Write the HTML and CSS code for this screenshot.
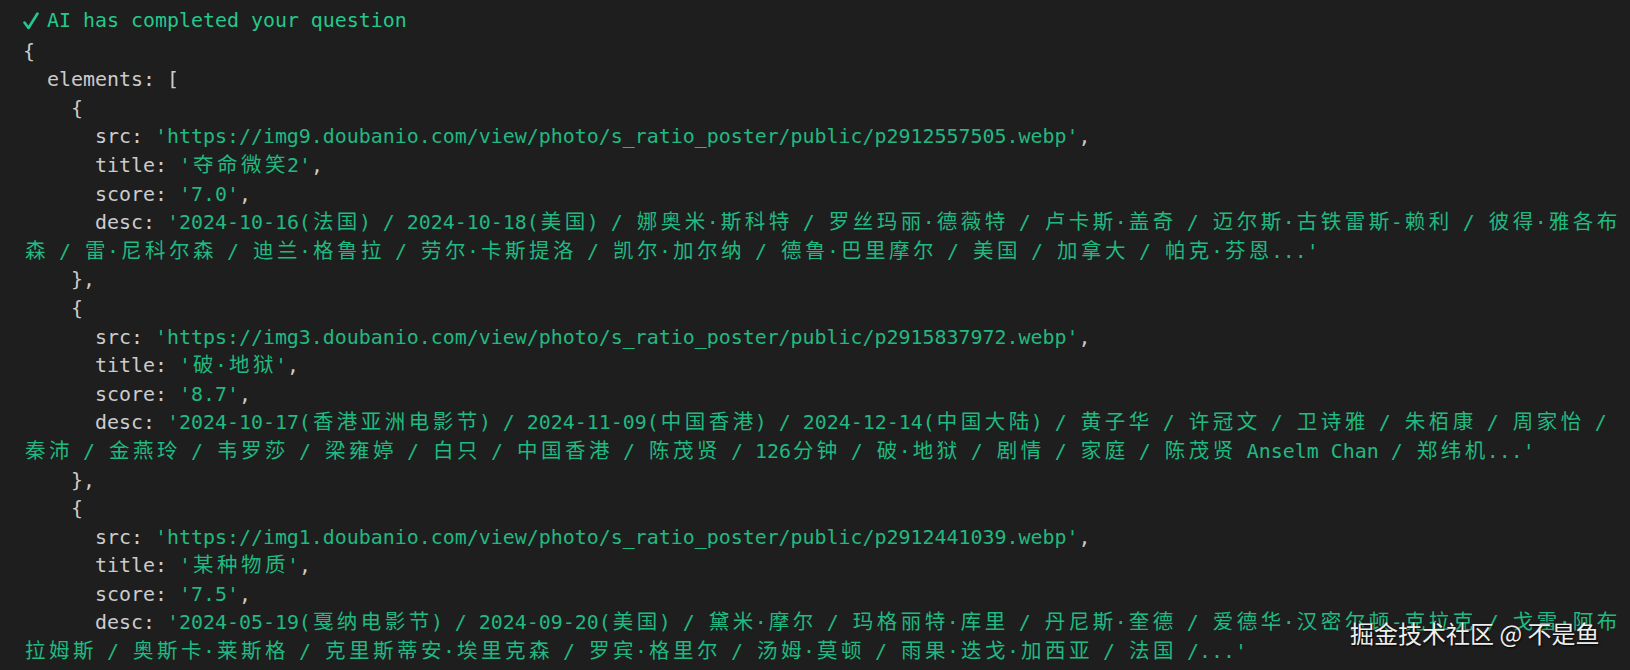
FILE: index.html
```html
<!DOCTYPE html>
<html lang="en">
<head>
<meta charset="utf-8">
<title>Terminal output</title>
<link rel="stylesheet" href="styles.css">
</head>
<body>
<main class="term">
<div class="line title"><span class="check"><svg width="16" height="18" viewBox="0 0 16 18"><path d="M1.5 10.5 L5.5 16 L14.5 1.5" fill="none" stroke="#23c98a" stroke-width="2.6" stroke-linecap="round" stroke-linejoin="round"/></svg></span>AI has completed your question</div>
<div class="line">{</div>
<div class="line">  elements: [</div>
<div class="line">    {</div>
<div class="line">      src: <span class="s">'https://img9.doubanio.com/view/photo/s_ratio_poster/public/p2912557505.webp'</span>,</div>
<div class="line">      title: <span class="s">'<span class="c">夺命微笑</span>2'</span>,</div>
<div class="line">      score: <span class="s">'7.0'</span>,</div>
<div class="line">      desc: <span class="s">'2024-10-16(<span class="c">法国</span>) / 2024-10-18(<span class="c">美国</span>) / <span class="c">娜奥米</span>·<span class="c">斯科特</span> / <span class="c">罗丝玛丽</span>·<span class="c">德薇特</span> / <span class="c">卢卡斯</span>·<span class="c">盖奇</span> / <span class="c">迈尔斯</span>·<span class="c">古铁雷斯</span>-<span class="c">赖利</span> / <span class="c">彼得</span>·<span class="c">雅各布</span></span></div>
<div class="line"><span class="s"><span class="c">森</span> / <span class="c">雷</span>·<span class="c">尼科尔森</span> / <span class="c">迪兰</span>·<span class="c">格鲁拉</span> / <span class="c">劳尔</span>·<span class="c">卡斯提洛</span> / <span class="c">凯尔</span>·<span class="c">加尔纳</span> / <span class="c">德鲁</span>·<span class="c">巴里摩尔</span> / <span class="c">美国</span> / <span class="c">加拿大</span> / <span class="c">帕克</span>·<span class="c">芬恩</span>...'</span></div>
<div class="line">    },</div>
<div class="line">    {</div>
<div class="line">      src: <span class="s">'https://img3.doubanio.com/view/photo/s_ratio_poster/public/p2915837972.webp'</span>,</div>
<div class="line">      title: <span class="s">'<span class="c">破</span>·<span class="c">地狱</span>'</span>,</div>
<div class="line">      score: <span class="s">'8.7'</span>,</div>
<div class="line">      desc: <span class="s">'2024-10-17(<span class="c">香港亚洲电影节</span>) / 2024-11-09(<span class="c">中国香港</span>) / 2024-12-14(<span class="c">中国大陆</span>) / <span class="c">黄子华</span> / <span class="c">许冠文</span> / <span class="c">卫诗雅</span> / <span class="c">朱栢康</span> / <span class="c">周家怡</span> /</span></div>
<div class="line"><span class="s"><span class="c">秦沛</span> / <span class="c">金燕玲</span> / <span class="c">韦罗莎</span> / <span class="c">梁雍婷</span> / <span class="c">白只</span> / <span class="c">中国香港</span> / <span class="c">陈茂贤</span> / 126<span class="c">分钟</span> / <span class="c">破</span>·<span class="c">地狱</span> / <span class="c">剧情</span> / <span class="c">家庭</span> / <span class="c">陈茂贤</span> Anselm Chan / <span class="c">郑纬机</span>...'</span></div>
<div class="line">    },</div>
<div class="line">    {</div>
<div class="line">      src: <span class="s">'https://img1.doubanio.com/view/photo/s_ratio_poster/public/p2912441039.webp'</span>,</div>
<div class="line">      title: <span class="s">'<span class="c">某种物质</span>'</span>,</div>
<div class="line">      score: <span class="s">'7.5'</span>,</div>
<div class="line">      desc: <span class="s">'2024-05-19(<span class="c">戛纳电影节</span>) / 2024-09-20(<span class="c">美国</span>) / <span class="c">黛米</span>·<span class="c">摩尔</span> / <span class="c">玛格丽特</span>·<span class="c">库里</span> / <span class="c">丹尼斯</span>·<span class="c">奎德</span> / <span class="c">爱德华</span>·<span class="c">汉密尔顿</span>-<span class="c">克拉克</span> / <span class="c">戈雷</span>·<span class="c">阿布</span></span></div>
<div class="line"><span class="s"><span class="c">拉姆斯</span> / <span class="c">奥斯卡</span>·<span class="c">莱斯格</span> / <span class="c">克里斯蒂安</span>·<span class="c">埃里克森</span> / <span class="c">罗宾</span>·<span class="c">格里尔</span> / <span class="c">汤姆</span>·<span class="c">莫顿</span> / <span class="c">雨果</span>·<span class="c">迭戈</span>·<span class="c">加西亚</span> / <span class="c">法国</span> /...'</span></div>
</main>
<div class="watermark">掘金技术社区 @ 不是鱼</div>
</body>
</html>
```

FILE: styles.css
```css
html, body {
  margin: 0;
  padding: 0;
  background: #1e1e1e;
}

body {
  width: 1630px;
  height: 670px;
  overflow: hidden;
  position: relative;
}

.term {
  padding: 7px 0 0 23px;
  font-family: "DejaVu Sans Mono", "Noto Sans CJK SC", monospace;
  font-size: 19.93px;
  line-height: 28.6px;
  color: #cccccc;
}

.line {
  white-space: pre;
  height: 28.6px;
}

.title {
  color: #23c98a;
  margin-bottom: 2px;
}

.check {
  display: inline-block;
  width: 24px;
  vertical-align: top;
  padding-top: 5px;
  height: 23px;
}

.check svg {
  display: block;
}

.s {
  color: #20b981;
}

.c {
  font-family: "Noto Sans CJK SC", sans-serif;
  font-size: 20.5px;
  line-height: 1;
  letter-spacing: 3.5px;
  padding-left: 2px;
  margin-right: -2px;
}

.watermark {
  position: absolute;
  left: 1350px;
  top: 617px;
  font-family: "Noto Sans CJK SC", "Noto Sans", sans-serif;
  font-size: 24px;
  line-height: 32px;
  color: #eeeeee;
  text-shadow: 1px 1px 2px rgba(0, 0, 0, 0.9);
  white-space: nowrap;
}
```
